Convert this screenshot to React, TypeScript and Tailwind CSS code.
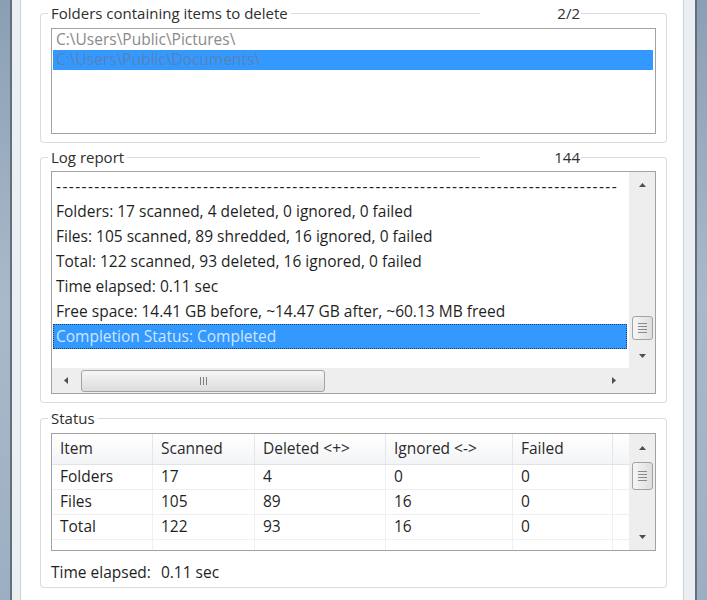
import type { ReactNode } from 'react'

interface GroupBoxProps {
  title: string
  count?: string
  children: ReactNode
  className?: string
  bodyClassName?: string
}

function GroupBox({ title, count, children, className = '', bodyClassName = '' }: GroupBoxProps) {
  return (
    <div className={`flex flex-col ${className}`}>
      <div className="flex h-[16px] items-center">
        <div className="h-[8px] w-[8px] self-end rounded-tl-[4px] border-l border-t border-[#d8dde2]" />
        <span className="px-[3px] text-[15px] leading-none text-[#2e2e2e]">{title}</span>
        <div className="h-0 flex-1 border-t border-[#d8dde2]" />
        {count && <span className="w-[101px] pr-[1px] text-right text-[15px] leading-none text-[#2e2e2e]">{count}</span>}
        <div className="h-[8px] w-[86px] self-end rounded-tr-[4px] border-r border-t border-[#d8dde2]" />
      </div>
      <div className={`rounded-b-[4px] border-x border-b border-[#d8dde2] px-[10px] ${bodyClassName}`}>
        {children}
      </div>
    </div>
  )
}

function Arrow({ dir }: { dir: 'up' | 'down' | 'left' | 'right' }) {
  const points = {
    up: '0,4 3.5,0 7,4',
    down: '0,0 7,0 3.5,4',
    left: '4,0 4,7 0,3.5',
    right: '0,0 4,3.5 0,7',
  }[dir]
  const vertical = dir === 'up' || dir === 'down'
  return (
    <svg width={vertical ? 7 : 4} height={vertical ? 4 : 7} viewBox={vertical ? '0 0 7 4' : '0 0 4 7'}>
      <polygon points={points} fill="#4f4f4f" />
    </svg>
  )
}

function VGrip() {
  return (
    <div className="flex flex-col gap-[2px]">
      <div className="h-px w-[9px] bg-[#8a8a8a]" />
      <div className="h-px w-[9px] bg-[#8a8a8a]" />
      <div className="h-px w-[9px] bg-[#8a8a8a]" />
      <div className="h-px w-[9px] bg-[#8a8a8a]" />
    </div>
  )
}

function VScroll({ zone, thumbTop, thumbHeight }: { zone: number; thumbTop: number; thumbHeight: number }) {
  return (
    <div className="flex w-[26px] flex-col bg-[#eeeeee]">
      <div className="flex shrink-0 items-center justify-center" style={{ height: zone }}>
        <Arrow dir="up" />
      </div>
      <div className="flex flex-1 flex-col items-center">
        <div
          className="flex w-[21px] items-center justify-center rounded-[3px] border border-[#a3a3a3] bg-gradient-to-r from-[#f6f6f6] to-[#dedede]"
          style={{ marginTop: thumbTop, height: thumbHeight }}
        >
          <VGrip />
        </div>
      </div>
      <div className="flex shrink-0 items-center justify-center" style={{ height: zone }}>
        <Arrow dir="down" />
      </div>
    </div>
  )
}

const logLines = [
  'Folders: 17 scanned, 4 deleted, 0 ignored, 0 failed',
  'Files: 105 scanned, 89 shredded, 16 ignored, 0 failed',
  'Total: 122 scanned, 93 deleted, 16 ignored, 0 failed',
  'Time elapsed: 0.11 sec',
  'Free space: 14.41 GB before, ~14.47 GB after, ~60.13 MB freed',
]

const statusRows = [
  ['Folders', '17', '4', '0', '0'],
  ['Files', '105', '89', '16', '0'],
  ['Total', '122', '93', '16', '0'],
]

const headers = ['Item', 'Scanned', 'Deleted <+>', 'Ignored <->', 'Failed']

export default function App() {
  return (
    <div className="flex h-[600px] w-[707px] overflow-hidden bg-white font-['Open_Sans',sans-serif] text-[15.5px] text-[#1f1f1f]">
      {/* left window frame */}
      <div className="w-[10px] bg-gradient-to-b from-[#8b9fb4] via-[#a9b9c9] to-[#9cafc2]" />
      <div className="w-[2px] bg-[#60707f]" />
      <div className="w-[8px] bg-[#eceff2]" />
      <div className="w-px bg-[#cdd3d9]" />

      <div className="flex flex-1 flex-col pl-[19px] pr-[16px] pt-[5px]">
        <GroupBox title="Folders containing items to delete" count="2/2" bodyClassName="pb-[8px] pt-[7px]">
          <div className="h-[106px] border border-[#a2a2a2] bg-white pt-px">
            <div className="flex h-[20px] items-center pl-[4px] text-[#8a8a8a]">C:\Users\Public\Pictures\</div>
            <div className="ml-px mr-[2px] flex h-[20px] items-center bg-[#3399ff] pl-[3px] text-[#5b82b5]">
              C:\Users\Public\Documents\
            </div>
          </div>
        </GroupBox>

        <GroupBox title="Log report" count="144" className="mt-[6px]" bodyClassName="pb-[8px] pt-[6px]">
          <div className="flex h-[223px] flex-col border border-[#a2a2a2] bg-white">
            <div className="flex h-[196px]">
              <div className="flex flex-1 flex-col overflow-hidden pt-[2px]">
                <div className="flex h-[25px] items-center whitespace-nowrap pl-[4px] tracking-[1.4px]">
                  {'-'.repeat(88)}
                </div>
                {logLines.map((line) => (
                  <div key={line} className="flex h-[25px] items-center whitespace-nowrap pl-[4px]">
                    {line}
                  </div>
                ))}
                <div className="ml-px mr-[2px] flex h-[25px] items-center whitespace-nowrap border border-dotted border-[#1c3f66] bg-[#3399ff] pl-[2px] text-[#cfe6ff]">
                  Completion Status: Completed
                </div>
              </div>
              <VScroll zone={25} thumbTop={119} thumbHeight={24} />
            </div>
            <div className="flex h-[25px] bg-[#eeeeee]">
              <div className="flex flex-1 items-center">
                <div className="flex w-[27px] items-center justify-center">
                  <Arrow dir="left" />
                </div>
                <div className="ml-[2px] flex h-[22px] w-[244px] items-center justify-center gap-[2px] rounded-[3px] border border-[#a3a3a3] bg-gradient-to-b from-[#f6f6f6] to-[#dcdcdc]">
                  <div className="h-[8px] w-px bg-[#7e7e7e]" />
                  <div className="h-[8px] w-px bg-[#7e7e7e]" />
                  <div className="h-[8px] w-px bg-[#7e7e7e]" />
                </div>
                <div className="flex-1" />
                <div className="flex w-[27px] items-center justify-center pr-[3px]">
                  <Arrow dir="right" />
                </div>
              </div>
              <div className="w-[26px] bg-[#eeeeee]" />
            </div>
          </div>
        </GroupBox>

        <GroupBox title="Status" className="mt-[7px]" bodyClassName="pb-[4px] pt-[7px]">
          <div className="flex h-[118px] border border-[#a2a2a2] bg-white">
            <div className="flex flex-1 flex-col">
              <div className="grid h-[31px] grid-cols-[101px_102px_131px_127px_100px_1fr] border-b border-[#e3e3e3] bg-gradient-to-b from-white to-[#f3f4f6] text-[#2a2a2a]">
                {headers.map((h) => (
                  <div key={h} className="flex items-center border-r border-[#e3e6ea] pl-[8px]">
                    {h}
                  </div>
                ))}
                <div />
              </div>
              {statusRows.map((row) => (
                <div key={row[0]} className="grid h-[25px] grid-cols-[101px_102px_131px_127px_100px_1fr] border-b border-[#f0f0f0]">
                  {row.map((cell, i) => (
                    <div key={i} className="flex items-center border-r border-[#f0f0f0] pl-[8px]">
                      {cell}
                    </div>
                  ))}
                  <div />
                </div>
              ))}
              <div className="grid flex-1 grid-cols-[101px_102px_131px_127px_100px_1fr]">
                <div className="border-r border-[#f0f0f0]" />
                <div className="border-r border-[#f0f0f0]" />
                <div className="border-r border-[#f0f0f0]" />
                <div className="border-r border-[#f0f0f0]" />
                <div className="border-r border-[#f0f0f0]" />
                <div />
              </div>
            </div>
            <VScroll zone={27} thumbTop={1} thumbHeight={28} />
          </div>
          <div className="mt-[12px] flex h-[20px] items-center gap-[10px]">
            <span>Time elapsed:</span>
            <span>0.11 sec</span>
          </div>
        </GroupBox>
      </div>

      {/* right window frame */}
      <div className="w-px bg-[#cdd3d9]" />
      <div className="w-[11px] bg-[#eceff2]" />
      <div className="w-[2px] bg-[#60707f]" />
      <div className="w-[10px] bg-gradient-to-b from-[#8b9fb4] via-[#a9b9c9] to-[#9cafc2]" />
    </div>
  )
}
